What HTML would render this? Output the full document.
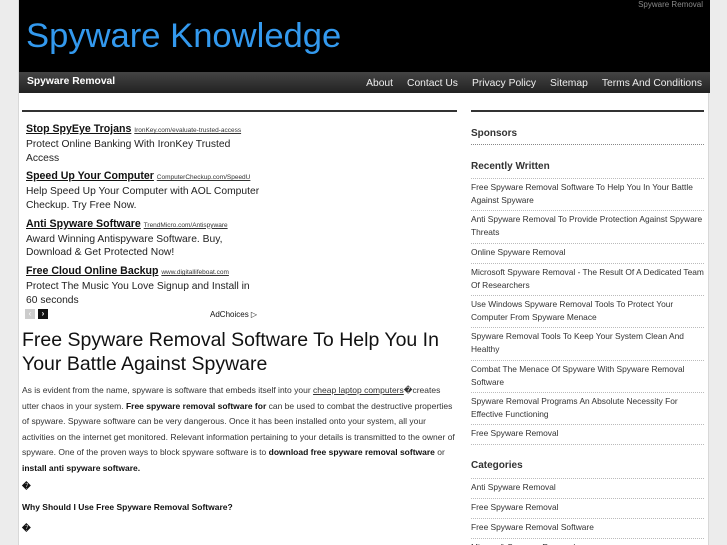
<!DOCTYPE html>
<html style="overflow:hidden;height:545px"><head><meta charset="utf-8"><style>
*{margin:0;padding:0;box-sizing:border-box}
body{width:727px;height:545px;overflow:hidden;background:#ececec;font-family:"Liberation Sans",sans-serif;color:#222;position:relative}
#wrap{position:absolute;left:18px;top:0;width:691px;height:545px;background:#fff;border-left:1px solid #d8d8d8;border-right:1px solid #d8d8d8}
#hdr{position:absolute;left:0;top:0;width:691px;height:72px;background:#000}
#hdr .tag{position:absolute;right:7px;top:0px;font-size:8px;color:#888}
#hdr h1{position:absolute;left:7px;top:17px;font-size:34.6px;font-weight:normal;color:#3399ee}
#nav{position:absolute;left:0;top:72px;width:691px;height:21px;background:linear-gradient(#444,#222);color:#eee;font-size:10.3px}
#nav .l{position:absolute;left:8px;top:4px;font-weight:bold;color:#fff}
#nav .r{position:absolute;right:8px;top:6px}
#nav .r span{margin-left:14px}
.line{position:absolute;height:2px;background:#333;top:110px}
#ads{position:absolute;left:26px;top:123px;width:238px;font-size:10.3px;line-height:13.8px;color:#222}
#ads .t{font-size:10.6px;font-weight:bold;text-decoration:underline;color:#111}
#ads .u{font-size:6.5px;text-decoration:underline;color:#333}
#ads .b{margin-bottom:5px}
#h2{position:absolute;left:22px;top:328px;width:440px;font-size:19.5px;line-height:24px;font-weight:normal;color:#111}
#p{position:absolute;left:22px;top:383px;width:436px;font-size:8.5px;line-height:15.6px;color:#333}
.x{position:absolute;left:22px;font-size:8.5px;color:#111;font-weight:bold}
#p b{color:#111}
#side{position:absolute;left:471px;top:0;width:233px;font-size:8.4px;color:#333}
.sh{position:absolute;left:0;font-size:10px;font-weight:bold;color:#333}
.it{position:absolute;left:0;width:233px;line-height:12.8px;border-top:1px dotted #bbb;padding-top:2px}
</style></head><body>
<div id="wrap">
<div id="hdr"><div class="tag">Spyware Removal</div><h1>Spyware Knowledge</h1></div>
<div id="nav"><div class="l">Spyware Removal</div><div class="r"><span>About</span><span>Contact Us</span><span>Privacy Policy</span><span>Sitemap</span><span>Terms And Conditions</span></div></div>
</div>
<div class="line" style="left:22px;width:435px"></div>
<div class="line" style="left:471px;width:233px"></div>
<div id="ads">
<div class="b"><span class="t">Stop SpyEye Trojans</span> <span class="u">IronKey.com/evaluate-trusted-access</span><br>Protect Online Banking With IronKey Trusted<br>Access</div>
<div class="b"><span class="t">Speed Up Your Computer</span> <span class="u">ComputerCheckup.com/SpeedU</span><br>Help Speed Up Your Computer with AOL Computer<br>Checkup. Try Free Now.</div>
<div class="b"><span class="t">Anti Spyware Software</span> <span class="u">TrendMicro.com/Antispyware</span><br>Award Winning Antispyware Software. Buy,<br>Download &amp; Get Protected Now!</div>
<div class="b"><span class="t">Free Cloud Online Backup</span> <span class="u">www.digitallifeboat.com</span><br>Protect The Music You Love Signup and Install in<br>60 seconds</div>
</div>
<div style="position:absolute;left:25px;top:309px;width:10px;height:10px;background:#ccc;color:#fff;font-size:8px;text-align:center;line-height:10px">‹</div>
<div style="position:absolute;left:38px;top:309px;width:10px;height:10px;background:#111;color:#fff;font-size:8px;text-align:center;line-height:10px;font-weight:bold">›</div>
<div style="position:absolute;left:210px;top:310px;font-size:8px;color:#111">AdChoices ▷</div>
<div id="h2">Free Spyware Removal Software To Help You In Your Battle Against Spyware</div>
<div id="p">As is evident from the name, spyware is software that embeds itself into your <u>cheap laptop computers</u>�creates utter chaos in your system. <b>Free spyware removal software for</b> can be used to combat the destructive properties of spyware. Spyware software can be very dangerous. Once it has been installed onto your system, all your activities on the internet get monitored. Relevant information pertaining to your details is transmitted to the owner of spyware. One of the proven ways to block spyware software is to <b>download free spyware removal software</b> or <b>install anti spyware software.</b></div>
<div class="x" style="top:481px">�</div>
<div class="x" style="top:502px">Why Should I Use Free Spyware Removal Software?</div>
<div class="x" style="top:523px">�</div>
<div id="side">
<div class="sh" style="top:128px">Sponsors</div>
<div class="it" style="top:144px;border-top:1px dotted #888"></div>
<div class="sh" style="top:161px">Recently Written</div>
<div class="it" style="top:178px">Free Spyware Removal Software To Help You In Your Battle Against Spyware</div>
<div class="it" style="top:210px">Anti Spyware Removal To Provide Protection Against Spyware Threats</div>
<div class="it" style="top:243px">Online Spyware Removal</div>
<div class="it" style="top:263px">Microsoft Spyware Removal - The Result Of A Dedicated Team Of Researchers</div>
<div class="it" style="top:295px">Use Windows Spyware Removal Tools To Protect Your Computer From Spyware Menace</div>
<div class="it" style="top:327px">Spyware Removal Tools To Keep Your System Clean And Healthy</div>
<div class="it" style="top:360px">Combat The Menace Of Spyware With Spyware Removal Software</div>
<div class="it" style="top:392px">Spyware Removal Programs An Absolute Necessity For Effective Functioning</div>
<div class="it" style="top:424px">Free Spyware Removal</div>
<div class="it" style="top:444px"></div>
<div class="sh" style="top:460px">Categories</div>
<div class="it" style="top:478px">Anti Spyware Removal</div>
<div class="it" style="top:498px">Free Spyware Removal</div>
<div class="it" style="top:518px">Free Spyware Removal Software</div>
<div class="it" style="top:538px">Microsoft Spyware Removal</div>
</div>
</body></html>
